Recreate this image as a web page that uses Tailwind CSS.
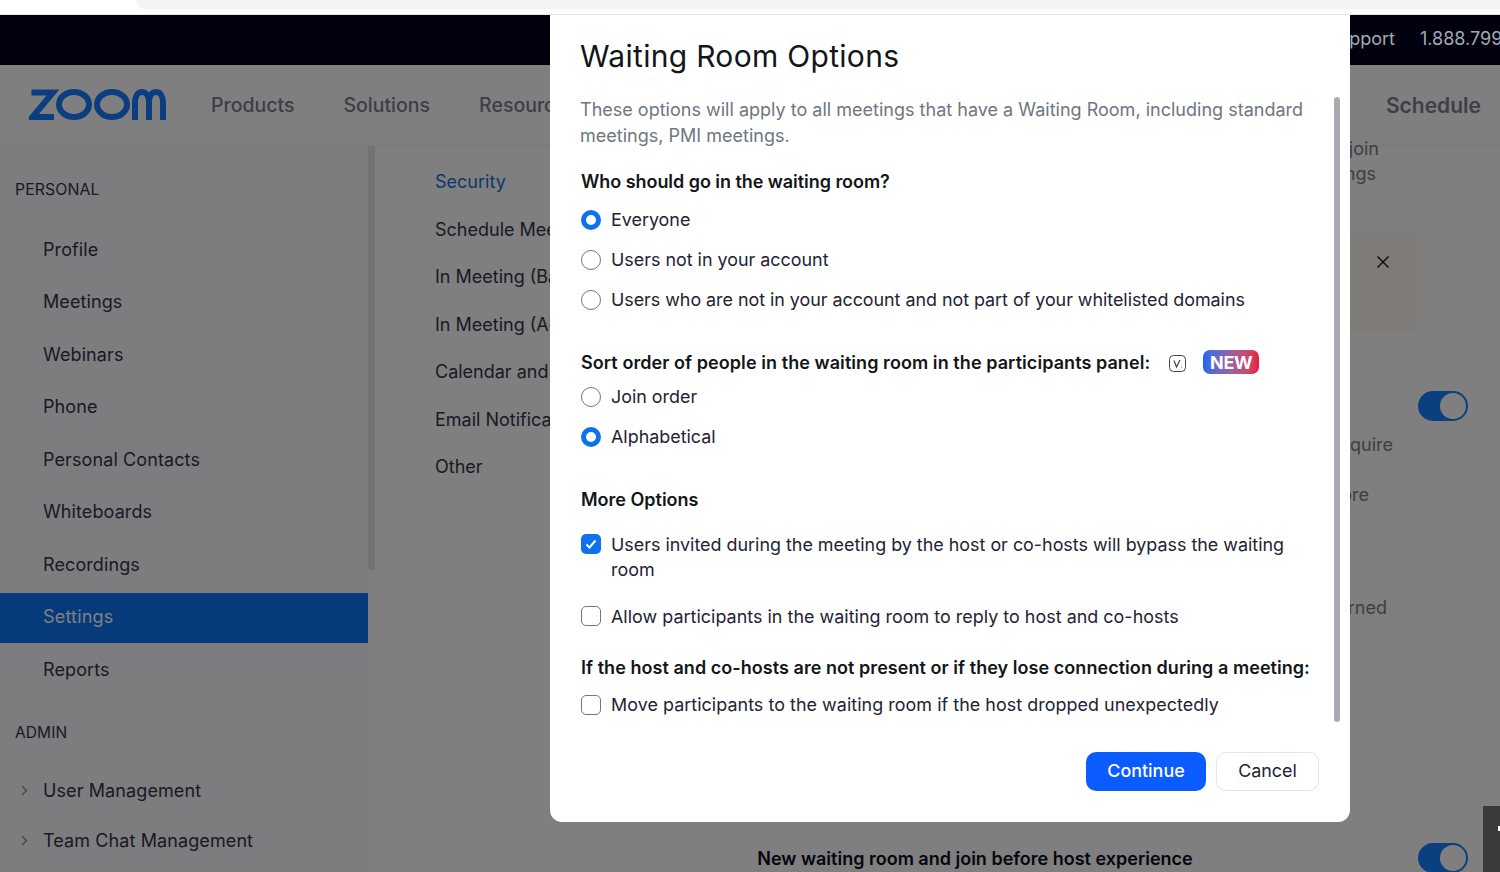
<!DOCTYPE html>
<html lang="en">
<head>
    <meta charset="UTF-8">
    <meta name="viewport" content="width=device-width, initial-scale=1.0">
    <title>Waiting Room Options</title>
    <script src="https://cdn.jsdelivr.net/npm/@tailwindcss/browser@4"></script>
</head>
<body class="relative h-[872px] w-[1500px] overflow-hidden bg-white font-[Inter,sans-serif] text-[18px] text-[#34344a]">
    <!-- browser strip -->
    <div class="h-[15px] bg-white border-b border-[#e6e6e6]">
        <div class="ml-[136px] h-[9px] rounded-bl-[12px] bg-[#f1f3f4]"></div>
    </div>

    <!-- top bar -->
    <div class="flex h-[50px] items-center justify-end bg-[#00000f] pb-[4px] text-[#a4abb3] whitespace-nowrap">
        <span class="mr-[25px]">Support</span>
        <span class="w-[80px]">1.888.799.9666</span>
    </div>

    <!-- main header -->
    <header class="flex h-[81px] items-center border-b border-[#eeeeee] bg-white pl-[29px] pr-[19px]">
        <svg class="h-[34px] w-[139px]" viewBox="0 0 139 34" fill="none" stroke="#167aff" stroke-width="6">
            <path d="M2.500 4.500H24L3.500 29H25"/>
            <ellipse cx="45" cy="16.500" rx="15" ry="12.500"/>
            <ellipse cx="83" cy="16.500" rx="15" ry="12.500"/>
            <path d="M106 32V15C106 8 109 4 113 4C117 4 120 8 120 15V32M120 15C120 8 123 4 127 4C131 4 134 8 134 15V32"/>
        </svg>
        <nav class="ml-[43px] mt-[2px] flex gap-[49px] text-[19.500px] font-medium text-[#7c7c90]">
            <span>Products</span>
            <span>Solutions</span>
            <span>Resources</span>
        </nav>
        <span class="ml-auto mt-[2px] text-[21px] font-semibold text-[#7c7c90]">Schedule</span>
    </header>

    <div class="flex h-[726px]">
        <!-- sidebar -->
        <aside class="w-[368px] shrink-0 bg-[#fafafe] tracking-[0.1px]">
            <p class="mt-[33px] h-[22px] pl-[15px] text-[15.800px] leading-[22px]">PERSONAL</p>
            <ul class="mt-[22px]">
                <li class="flex h-[52.500px] items-center pl-[43px]">Profile</li>
                <li class="flex h-[52.500px] items-center pl-[43px]">Meetings</li>
                <li class="flex h-[52.500px] items-center pl-[43px]">Webinars</li>
                <li class="flex h-[52.500px] items-center pl-[43px]">Phone</li>
                <li class="flex h-[52.500px] items-center pl-[43px]">Personal Contacts</li>
                <li class="flex h-[52.500px] items-center pl-[43px]">Whiteboards</li>
                <li class="flex h-[52.500px] items-center pl-[43px]">Recordings</li>
                <li class="mt-[2px] flex h-[50px] items-center bg-[#0c74f6] pb-[2px] pl-[43px] tracking-[0.2px] text-white">Settings</li>
                <li class="mt-[1px] flex h-[52.500px] items-center pl-[43px]">Reports</li>
            </ul>
            <p class="mt-[26px] h-[22px] pl-[15px] text-[15.500px] leading-[22px]">ADMIN</p>
            <ul class="mt-[21px]">
                <li class="flex h-[50px] items-center">
                    <svg class="ml-[21px] mr-[15px] h-[11px] w-[7px]" viewBox="0 0 7 11" fill="none" stroke="#888" stroke-width="1.300"><path d="M1 1l4.500 4.500L1 10"/></svg>User Management
                </li>
                <li class="flex h-[50px] items-center">
                    <svg class="ml-[21px] mr-[15px] h-[11px] w-[7px]" viewBox="0 0 7 11" fill="none" stroke="#888" stroke-width="1.300"><path d="M1 1l4.500 4.500L1 10"/></svg>Team Chat Management
                </li>
            </ul>
        </aside>
        <div class="w-[7px] shrink-0 bg-[#fafafa]">
            <div class="h-[424px] rounded-b-[4px] bg-[#e4e4e4]"></div>
        </div>

        <!-- settings tabs -->
        <ul class="ml-[60px] w-[320px] shrink-0 pt-[12px]">
            <li class="flex h-[47.500px] items-center text-[#1a6fd6]">Security</li>
            <li class="flex h-[47.500px] items-center">Schedule Meeting</li>
            <li class="flex h-[47.500px] items-center">In Meeting (Basic)</li>
            <li class="flex h-[47.500px] items-center">In Meeting (Advanced)</li>
            <li class="flex h-[47.500px] items-center">Calendar and Contacts</li>
            <li class="flex h-[47.500px] items-center">Email Notification</li>
            <li class="flex h-[47.500px] items-center">Other</li>
        </ul>

        <!-- settings content, mostly behind the dialog -->
        <div class="min-w-0 flex-1 text-[#7c7c90]">
            <div class="mt-[-10px] mr-[121px] text-right leading-[25px]">
                <p>join</p>
                <p class="mr-[3px]">meetings</p>
            </div>
            <div class="mt-[47px] ml-[300px] flex h-[99px] w-[362px] items-start justify-end rounded-[6px] bg-[#fdf7f3] pr-[27px] pt-[22px]">
                <svg class="h-[14px] w-[14px]" viewBox="0 0 14 14" fill="none" stroke="#222" stroke-width="1.500"><path d="M1.500 1.500l11 11M12.500 1.500l-11 11"/></svg>
            </div>
            <div class="mt-[59px] ml-[663px] flex h-[30px] w-[50px] items-center justify-end rounded-full bg-[#1480ff] pr-[2px]">
                <span class="h-[26px] w-[26px] rounded-full bg-white"></span>
            </div>
            <p class="mt-[11px] mr-[107px] h-[26px] text-right leading-[26px]">require</p>
            <p class="mt-[24px] mr-[131px] h-[26px] text-right leading-[26px]">before</p>
            <p class="mt-[87px] mr-[113px] h-[26px] text-right leading-[26px]">returned</p>
            <div class="mt-[222px] flex items-center">
                <p class="w-[440px] whitespace-nowrap text-center font-semibold text-[#0c0c1c]">New waiting room and join before host experience</p>
                <div class="ml-[223px] flex h-[30px] w-[50px] shrink-0 items-center justify-end rounded-full bg-[#1480ff] pr-[2px]">
                    <span class="h-[26px] w-[26px] rounded-full bg-white"></span>
                </div>
            </div>
        </div>
    </div>

    <!-- dim layer -->
    <div class="absolute inset-x-0 bottom-0 top-[65px] bg-black/50"></div>
    <div class="absolute left-[1483px] top-[806px] h-[66px] w-[17px] bg-[#3a3a3a]">
        <span class="absolute left-[15px] top-[20px] h-[5px] w-[2px] bg-white"></span>
    </div>

    <!-- dialog -->
    <div class="absolute left-[550px] top-[15px] h-[807px] w-[800px] rounded-b-[12px] bg-white pl-[31px] pr-[31px] pt-[21px] text-[17.900px] text-[#232333]">
        <h2 class="ml-[-1px] h-[40px] text-[30px] leading-[40px] tracking-[0.3px] text-[#131619]">Waiting Room Options</h2>
        <p class="ml-[-1px] mt-[21px] w-[740px] text-[18px] leading-[26px] tracking-[0.01px] text-[#6e7680]">These options will apply to all meetings that have a Waiting Room, including standard meetings, PMI meetings.</p>

        <h3 class="mt-[20px] h-[26px] text-[18px] font-semibold leading-[26px] tracking-[-0.05px] text-[#131619]">Who should go in the waiting room?</h3>
        <label class="mt-[12px] flex h-[26px] items-center gap-[10px]">
            <span class="h-[20px] w-[20px] rounded-full border-[5px] border-[#0e72ed] bg-white"></span>Everyone
        </label>
        <label class="mt-[14px] flex h-[26px] items-center gap-[10px]">
            <span class="h-[20px] w-[20px] rounded-full border border-[#6e7680] bg-white"></span>Users not in your account
        </label>
        <label class="mt-[14px] flex h-[26px] items-center gap-[10px] tracking-[-0.03px]">
            <span class="h-[20px] w-[20px] rounded-full border border-[#6e7680] bg-white"></span>Users who are not in your account and not part of your whitelisted domains
        </label>

        <div class="mt-[36px] flex h-[26px] items-center text-[18px] font-semibold tracking-[0.07px] text-[#131619]">
            <h3>Sort order of people in the waiting room in the participants panel:</h3>
            <svg class="ml-[19px] mt-[2px] h-[17px] w-[17px]" viewBox="0 0 17 17" fill="none" stroke="#444"><rect x="0.500" y="0.500" width="16" height="16" rx="4"/><path d="M5 5.500l2.500 6.500L11 5M12 12h.8" stroke-width="1.200"/></svg>
            <span class="ml-[17px] flex h-[24px] w-[56px] items-center justify-center rounded-[7px] bg-gradient-to-r from-[#0e66f0] to-[#ea1440] font-bold tracking-[-0.3px] text-white">NEW</span>
        </div>
        <label class="mt-[9px] flex h-[26px] items-center gap-[10px]">
            <span class="h-[20px] w-[20px] rounded-full border border-[#6e7680] bg-white"></span>Join order
        </label>
        <label class="mt-[14px] flex h-[26px] items-center gap-[10px]">
            <span class="h-[20px] w-[20px] rounded-full border-[5px] border-[#0e72ed] bg-white"></span>Alphabetical
        </label>

        <h3 class="mt-[37px] h-[26px] text-[18px] font-semibold leading-[26px] text-[#131619]">More Options</h3>
        <label class="mt-[19px] flex items-start gap-[10px] leading-[25px]">
            <span class="mt-[2px] flex h-[20px] w-[20px] shrink-0 items-center justify-center rounded-[5px] bg-[#0e72ed]">
                <svg class="h-[12px] w-[12px]" viewBox="0 0 12 12" fill="none" stroke="#fff" stroke-width="2"><path d="M1.500 6.500l3 3 6-7"/></svg>
            </span>
            <span class="w-[690px]">Users invited during the meeting by the host or co-hosts will bypass the waiting room</span>
        </label>
        <label class="mt-[22px] flex h-[26px] items-center gap-[10px] tracking-[0.03px]">
            <span class="mb-[2px] h-[20px] w-[20px] rounded-[5px] border border-[#6e7680] bg-white"></span>Allow participants in the waiting room to reply to host and co-hosts
        </label>

        <h3 class="mt-[25px] h-[26px] whitespace-nowrap text-[18px] font-semibold leading-[26px] tracking-[0.05px] text-[#131619]">If the host and co-hosts are not present or if they lose connection during a meeting:</h3>
        <label class="mt-[11px] flex h-[26px] items-center gap-[10px] tracking-[0.05px]">
            <span class="h-[20px] w-[20px] rounded-[5px] border border-[#6e7680] bg-white"></span>Move participants to the waiting room if the host dropped unexpectedly
        </label>

        <div class="mt-[34px] flex justify-end gap-[10px]">
            <button class="h-[39px] w-[120px] rounded-[10px] bg-[#0b5cff] font-medium text-white">Continue</button>
            <button class="h-[39px] w-[103px] rounded-[10px] border border-[#e4e4e7] bg-white text-[#232333]">Cancel</button>
        </div>

        <div class="absolute left-[784px] top-[82px] h-[625px] w-[6px] rounded-full bg-[#aaaab2]"></div>
    </div>
</body>
</html>
